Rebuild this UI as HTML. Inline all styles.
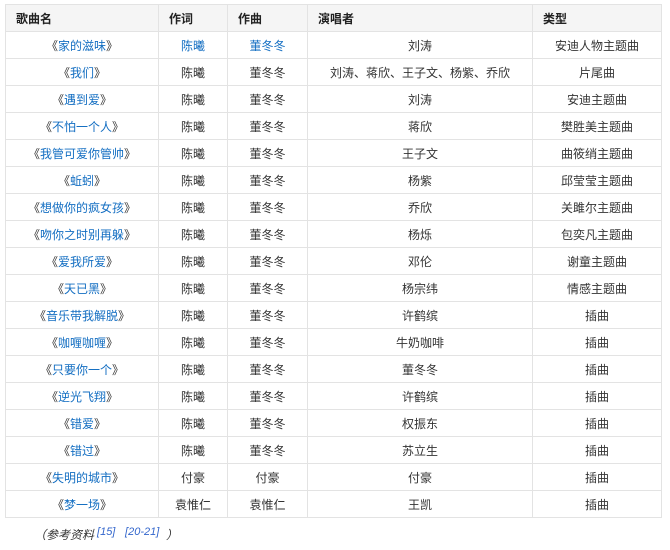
<!DOCTYPE html>
<html><head><meta charset="utf-8"><style>
body{margin:0;background:#fff;font-family:"Liberation Sans","Noto Sans CJK SC",sans-serif;font-size:12px;color:#333}
table{position:absolute;left:5px;top:4px;border-collapse:collapse;table-layout:fixed;width:656px}
td,th{border:1px solid #e3e3e3;height:26px;padding:0;text-align:center;white-space:nowrap}
th{background:#f5f5f5;text-align:left;padding-left:10px;font-weight:bold;color:#222}
a{color:#136ec2;text-decoration:none}
.ref{position:absolute;left:34px;top:526px;font-style:italic;color:#333}
.ref a{color:#3366cc;font-size:11px;position:relative;top:-4px;margin-left:3px}
</style></head><body>
<table>
<colgroup><col style="width:153px"><col style="width:69px"><col style="width:80px"><col style="width:225px"><col style="width:129px"></colgroup>
<tr><th>歌曲名</th><th>作词</th><th>作曲</th><th>演唱者</th><th>类型</th></tr>
<tr><td>《<a>家的滋味</a>》</td><td><a>陈曦</a></td><td><a>董冬冬</a></td><td>刘涛</td><td>安迪人物主题曲</td></tr>
<tr><td>《<a>我们</a>》</td><td>陈曦</td><td>董冬冬</td><td>刘涛、蒋欣、王子文、杨紫、乔欣</td><td>片尾曲</td></tr>
<tr><td>《<a>遇到爱</a>》</td><td>陈曦</td><td>董冬冬</td><td>刘涛</td><td>安迪主题曲</td></tr>
<tr><td>《<a>不怕一个人</a>》</td><td>陈曦</td><td>董冬冬</td><td>蒋欣</td><td>樊胜美主题曲</td></tr>
<tr><td>《<a>我管可爱你管帅</a>》</td><td>陈曦</td><td>董冬冬</td><td>王子文</td><td>曲筱绡主题曲</td></tr>
<tr><td>《<a>蚯蚓</a>》</td><td>陈曦</td><td>董冬冬</td><td>杨紫</td><td>邱莹莹主题曲</td></tr>
<tr><td>《<a>想做你的疯女孩</a>》</td><td>陈曦</td><td>董冬冬</td><td>乔欣</td><td>关雎尔主题曲</td></tr>
<tr><td>《<a>吻你之时别再躲</a>》</td><td>陈曦</td><td>董冬冬</td><td>杨烁</td><td>包奕凡主题曲</td></tr>
<tr><td>《<a>爱我所爱</a>》</td><td>陈曦</td><td>董冬冬</td><td>邓伦</td><td>谢童主题曲</td></tr>
<tr><td>《<a>天已黑</a>》</td><td>陈曦</td><td>董冬冬</td><td>杨宗纬</td><td>情感主题曲</td></tr>
<tr><td>《<a>音乐带我解脱</a>》</td><td>陈曦</td><td>董冬冬</td><td>许鹤缤</td><td>插曲</td></tr>
<tr><td>《<a>咖喱咖喱</a>》</td><td>陈曦</td><td>董冬冬</td><td>牛奶咖啡</td><td>插曲</td></tr>
<tr><td>《<a>只要你一个</a>》</td><td>陈曦</td><td>董冬冬</td><td>董冬冬</td><td>插曲</td></tr>
<tr><td>《<a>逆光飞翔</a>》</td><td>陈曦</td><td>董冬冬</td><td>许鹤缤</td><td>插曲</td></tr>
<tr><td>《<a>错爱</a>》</td><td>陈曦</td><td>董冬冬</td><td>权振东</td><td>插曲</td></tr>
<tr><td>《<a>错过</a>》</td><td>陈曦</td><td>董冬冬</td><td>苏立生</td><td>插曲</td></tr>
<tr><td>《<a>失明的城市</a>》</td><td>付豪</td><td>付豪</td><td>付豪</td><td>插曲</td></tr>
<tr><td>《<a>梦一场</a>》</td><td>袁惟仁</td><td>袁惟仁</td><td>王凯</td><td>插曲</td></tr>
</table>
<div class="ref">（参考资料<a>[15]</a> &nbsp;<a>[20-21]</a> &nbsp;）</div>
</body></html>
